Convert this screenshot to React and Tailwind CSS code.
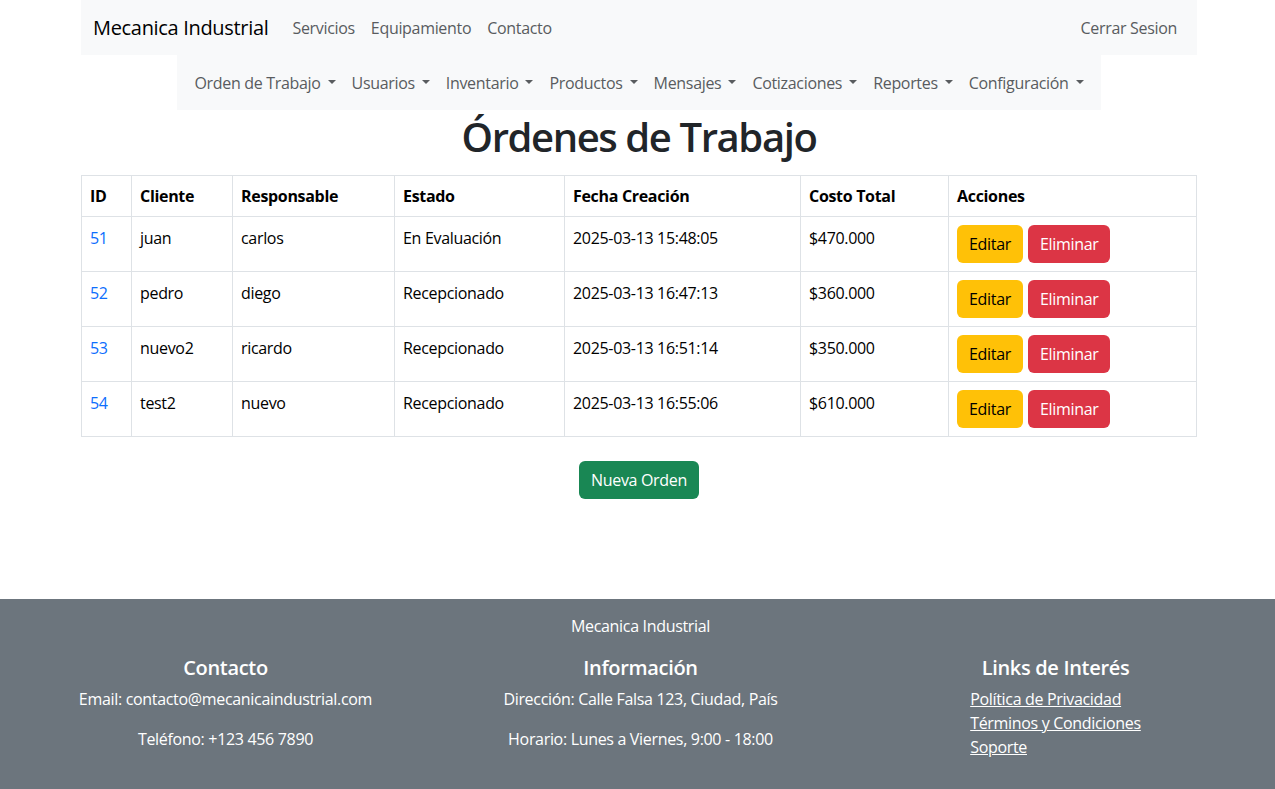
import React from "react";

const menus = [
  "Orden de Trabajo",
  "Usuarios",
  "Inventario",
  "Productos",
  "Mensajes",
  "Cotizaciones",
  "Reportes",
  "Configuración",
];

const orders = [
  { id: 51, cliente: "juan", resp: "carlos", estado: "En Evaluación", fecha: "2025-03-13 15:48:05", costo: "$470.000" },
  { id: 52, cliente: "pedro", resp: "diego", estado: "Recepcionado", fecha: "2025-03-13 16:47:13", costo: "$360.000" },
  { id: 53, cliente: "nuevo2", resp: "ricardo", estado: "Recepcionado", fecha: "2025-03-13 16:51:14", costo: "$350.000" },
  { id: 54, cliente: "test2", resp: "nuevo", estado: "Recepcionado", fecha: "2025-03-13 16:55:06", costo: "$610.000" },
];

function Caret() {
  return (
    <span className="inline-block ml-[7px] align-[0.255em] border-t-[0.3em] border-x-[0.3em] border-b-0 border-t-current border-x-transparent" />
  );
}

export default function App() {
  return (
    <div className="min-h-[789px] flex flex-col bg-white text-[#212529] text-[16px] leading-6 tracking-[-0.02em] font-['Open_Sans',sans-serif]">
      {/* top navbar */}
      <div className="w-[1116px] ml-[81px] h-[55px] bg-[#f8f9fa] flex items-center px-3">
        <span className="text-[20px] text-black mr-4">Mecanica Industrial</span>
        <nav className="flex text-[#595c5f]">
          <a className="px-2">Servicios</a>
          <a className="px-2">Equipamiento</a>
          <a className="px-2">Contacto</a>
        </nav>
        <a className="ml-auto px-2 text-[#595c5f]">Cerrar Sesion</a>
      </div>

      {/* module menu */}
      <div className="w-[924px] ml-[177px] h-[55px] bg-[#f8f9fa] flex items-center justify-center">
        {menus.map((m) => (
          <a key={m} className="px-2 text-[#595c5f] whitespace-nowrap">
            {m}
            <Caret />
          </a>
        ))}
      </div>

      <main className="w-[1116px] ml-[81px]">
        <h1 className="mt-[3px] mb-[14px] text-center text-[40px] leading-[48px] font-semibold tracking-[-0.035em]">Órdenes de Trabajo</h1>

        <table className="w-full border-collapse text-black">
          <thead>
            <tr className="h-[41px] text-left">
              <th className="border border-[#dee2e6] px-2 w-[50px] font-bold">ID</th>
              <th className="border border-[#dee2e6] px-2 w-[101px] font-bold">Cliente</th>
              <th className="border border-[#dee2e6] px-2 w-[162px] font-bold">Responsable</th>
              <th className="border border-[#dee2e6] px-2 w-[170px] font-bold">Estado</th>
              <th className="border border-[#dee2e6] px-2 w-[236px] font-bold">Fecha Creación</th>
              <th className="border border-[#dee2e6] px-2 w-[148px] font-bold">Costo Total</th>
              <th className="border border-[#dee2e6] px-2 font-bold">Acciones</th>
            </tr>
          </thead>
          <tbody>
            {orders.map((o) => (
              <tr key={o.id} className="align-top">
                <td className="border border-[#dee2e6] px-2 pt-[9px]">
                  <a className="text-[#0d6efd]">{o.id}</a>
                </td>
                <td className="border border-[#dee2e6] px-2 pt-[9px]">{o.cliente}</td>
                <td className="border border-[#dee2e6] px-2 pt-[9px]">{o.resp}</td>
                <td className="border border-[#dee2e6] px-2 pt-[9px]">{o.estado}</td>
                <td className="border border-[#dee2e6] px-2 pt-[9px]">{o.fecha}</td>
                <td className="border border-[#dee2e6] px-2 pt-[9px]">{o.costo}</td>
                <td className="border border-[#dee2e6] px-2 py-2">
                  <div className="flex gap-[5px]">
                    <button className="h-[38px] px-3 rounded-md bg-[#ffc107] text-black">Editar</button>
                    <button className="h-[38px] px-3 rounded-md bg-[#dc3545] text-white">Eliminar</button>
                  </div>
                </td>
              </tr>
            ))}
          </tbody>
        </table>

        <div className="flex justify-center mt-[24px]">
          <button className="h-[38px] px-3 rounded-md bg-[#198754] text-white">Nueva Orden</button>
        </div>
      </main>

      <footer className="mt-auto h-[190px] bg-[#6c757d] text-white pt-[15px] pl-[18px] pr-3">
        <p className="text-center">Mecanica Industrial</p>
        <div className="grid grid-cols-3 mt-[18px]">
          <div className="text-center">
            <h5 className="text-[20px] leading-6 font-semibold mb-[7px]">Contacto</h5>
            <p className="mb-4">Email: contacto@mecanicaindustrial.com</p>
            <p>Teléfono: +123 456 7890</p>
          </div>
          <div className="text-center">
            <h5 className="text-[20px] leading-6 font-semibold mb-[7px]">Información</h5>
            <p className="mb-4">Dirección: Calle Falsa 123, Ciudad, País</p>
            <p>Horario: Lunes a Viernes, 9:00 - 18:00</p>
          </div>
          <div className="text-center">
            <h5 className="text-[20px] leading-6 font-semibold mb-[7px]">Links de Interés</h5>
            <ul className="w-fit mx-auto text-left">
              <li><a className="underline">Política de Privacidad</a></li>
              <li><a className="underline">Términos y Condiciones</a></li>
              <li><a className="underline">Soporte</a></li>
            </ul>
          </div>
        </div>
      </footer>
    </div>
  );
}
